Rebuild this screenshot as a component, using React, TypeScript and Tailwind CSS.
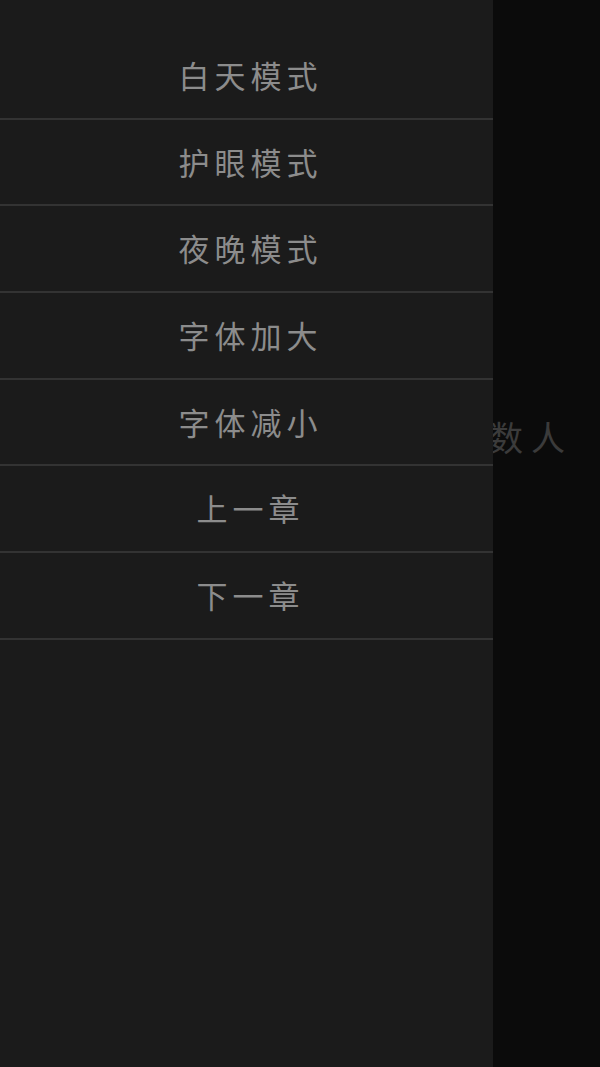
const items = ["白天模式", "护眼模式", "夜晚模式", "字体加大", "字体减小", "上一章", "下一章"];

export default function App() {
  return (
    <div
      className="relative h-[1067px] w-[600px] overflow-hidden bg-[#0b0b0b]"
      style={{ fontFamily: '"Noto Sans CJK SC", "Noto Sans", sans-serif' }}
    >
      {/* page content under the drawer */}
      <div className="flex h-full items-center justify-end pr-[27px] pb-[194px]">
        <span className="text-[34px] tracking-[8px] text-[#3b3b3b]">千万数人</span>
      </div>

      {/* side drawer */}
      <div className="absolute left-0 top-0 h-full w-[493px] bg-[#1b1b1b] pt-[33px]">
        {items.map((t) => (
          <div
            key={t}
            className="flex h-[86.67px] items-center justify-center border-b-2 border-[#333333] pl-[8px] text-[31px] tracking-[5px] text-[#8c8c8c]"
          >
            {t}
          </div>
        ))}
      </div>
    </div>
  );
}
